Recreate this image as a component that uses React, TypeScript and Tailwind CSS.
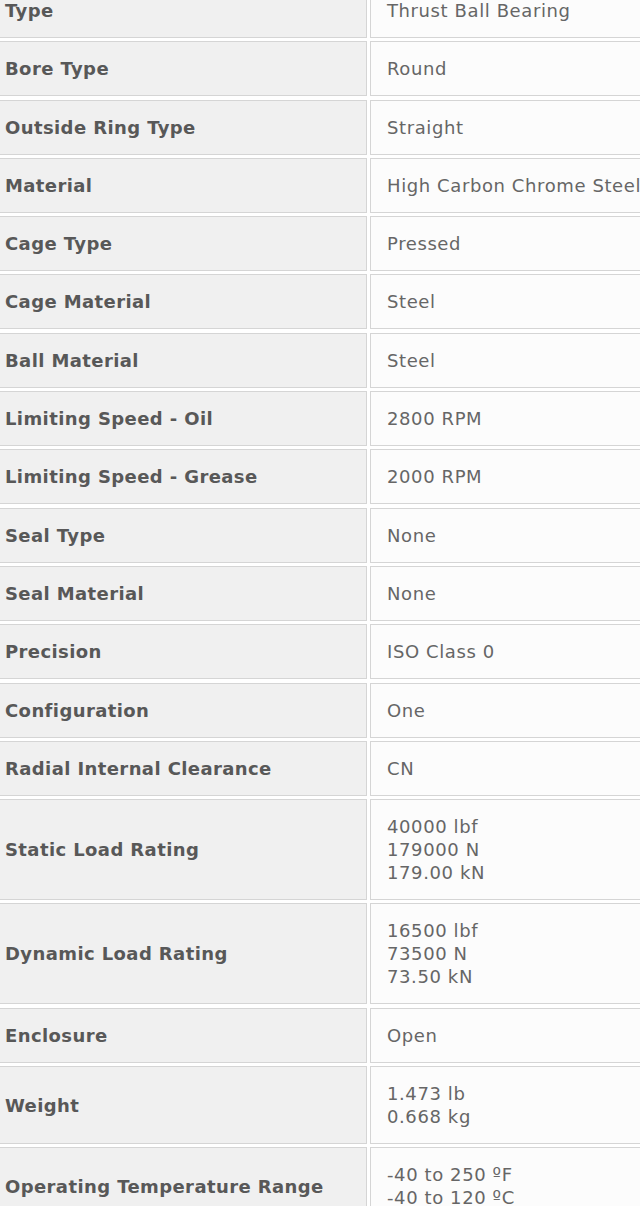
import { Fragment } from "react";

const rows: { label: string; values: string[] }[] = [
  { label: "Type", values: ["Thrust Ball Bearing"] },
  { label: "Bore Type", values: ["Round"] },
  { label: "Outside Ring Type", values: ["Straight"] },
  { label: "Material", values: ["High Carbon Chrome Steel"] },
  { label: "Cage Type", values: ["Pressed"] },
  { label: "Cage Material", values: ["Steel"] },
  { label: "Ball Material", values: ["Steel"] },
  { label: "Limiting Speed - Oil", values: ["2800 RPM"] },
  { label: "Limiting Speed - Grease", values: ["2000 RPM"] },
  { label: "Seal Type", values: ["None"] },
  { label: "Seal Material", values: ["None"] },
  { label: "Precision", values: ["ISO Class 0"] },
  { label: "Configuration", values: ["One"] },
  { label: "Radial Internal Clearance", values: ["CN"] },
  { label: "Static Load Rating", values: ["40000 lbf", "179000 N", "179.00 kN"] },
  { label: "Dynamic Load Rating", values: ["16500 lbf", "73500 N", "73.50 kN"] },
  { label: "Enclosure", values: ["Open"] },
  { label: "Weight", values: ["1.473 lb", "0.668 kg"] },
  { label: "Operating Temperature Range", values: ["-40 to 250 ºF", "-40 to 120 ºC"] },
];

export default function App() {
  return (
    <div className="h-[1206px] w-[640px] overflow-hidden bg-white font-['DejaVu_Sans',Verdana,sans-serif] text-[18px] leading-[23px]">
      <div className="-mt-[17px] -ml-[12px] grid w-[700px] grid-cols-[379px_1fr] gap-x-[3px] gap-y-[3.3px]">
        {rows.map((row) => (
          <Fragment key={row.label}>
            <div className="flex items-center whitespace-nowrap border border-[#d5d5d5] bg-[#f0f0f0] px-[16px] py-[15px] font-bold tracking-[0.4px] text-[#585858]">
              {row.label}
            </div>
            <div className="whitespace-nowrap border border-[#d5d5d5] bg-[#fcfcfc] px-[16px] py-[15px] tracking-[0.6px] text-[#666666]">
              {row.values.map((v) => (
                <div key={v}>{v}</div>
              ))}
            </div>
          </Fragment>
        ))}
      </div>
    </div>
  );
}
